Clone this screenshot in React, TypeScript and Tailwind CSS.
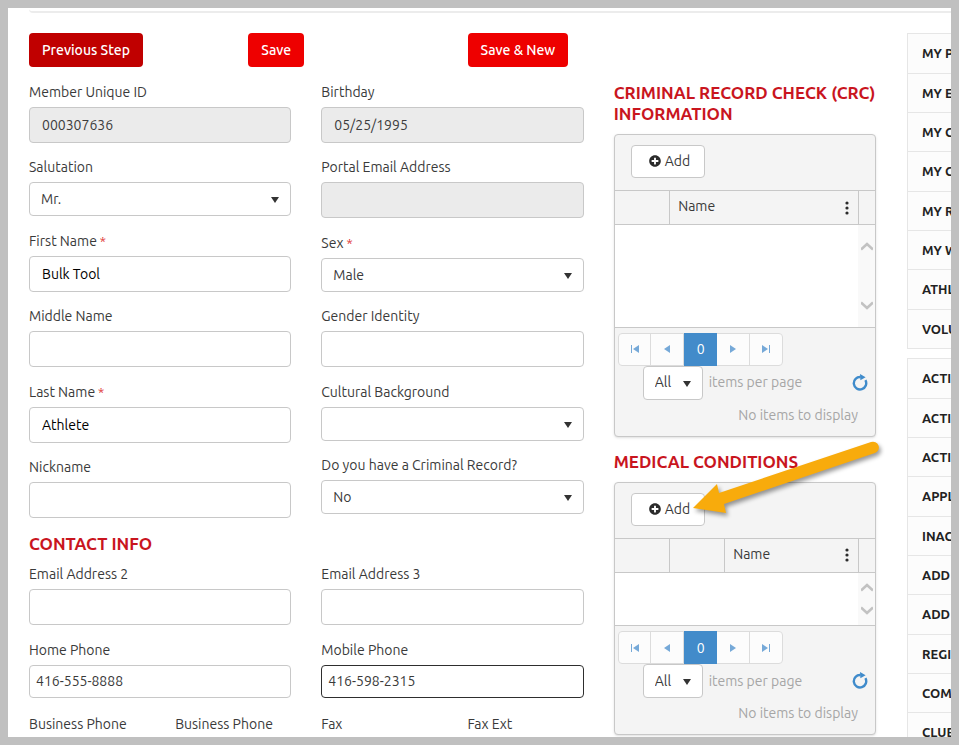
import { useState } from "react";
import type { ReactNode } from "react";
import clsx from "clsx";
import { FaPlusCircle } from "react-icons/fa";

const profileLinks = ["MY P", "MY E", "MY C", "MY C", "MY R", "MY W", "ATHL", "VOLU"];
const adminLinks = ["ACTI", "ACTI", "ACTI", "APPL", "INAC", "ADD", "ADD", "REGI", "COM", "CLUB"];

const Field = ({ id, label, required, children }: { id: string; label: string; required?: boolean; children?: ReactNode }) => (
  <div className="mb-[14px] even:mb-[15px]">
    <label htmlFor={id} className="mb-[5px] block h-5 whitespace-nowrap leading-5">
      {label}
      {required && <span className="text-[13px] text-[#e0312f]"> *</span>}
    </label>
    {children}
  </div>
);

const TextInput = ({ id, value = "", disabled }: { id: string; value?: string; disabled?: boolean }) => (
  <input
    id={id}
    type="text"
    defaultValue={value}
    disabled={disabled}
    className={clsx(
      "block h-9 w-full rounded border border-[#c8c8c8] px-3 pb-px outline-none",
      disabled ? "bg-[#ebebeb] text-[#3c3c3c]" : "bg-white text-black"
    )}
  />
);

const PhoneInput = ({ id, value, focused }: { id: string; value: string; focused?: boolean }) => (
  <input
    id={id}
    type="tel"
    defaultValue={value}
    className={clsx(
      "block h-[33px] w-full rounded border bg-white px-[6px] pb-px outline-none",
      focused ? "border-[#2e2e2e]" : "border-[#c8c8c8]"
    )}
  />
);

const Caret = ({ className }: { className?: string }) => (
  <svg className={clsx("pointer-events-none absolute h-[6px] w-2", className)} viewBox="0 0 8 6">
    <path d="M0 0h8L4 6z" fill="#333" />
  </svg>
);

const SelectInput = ({ id, options }: { id: string; options: string[] }) => (
  <div className="relative">
    <select id={id} className="block h-[34px] w-full appearance-none rounded border border-[#c8c8c8] bg-white px-[11px] pb-px outline-none">
      {options.map((o) => (
        <option key={o}>{o}</option>
      ))}
    </select>
    <Caret className="right-3 top-[15px]" />
  </div>
);

const SectionTitle = ({ children }: { children: ReactNode }) => (
  <h2 className="mb-[10px] text-[17px] font-bold leading-[21px] text-[#c9151e]">{children}</h2>
);

const Chevron = ({ up }: { up?: boolean }) => (
  <svg width="12" height="9" viewBox="0 0 12 9" className="block">
    <path d={up ? "M0 7.5L6 2l6 5.5" : "M0 1.5L6 7l6-5.5"} fill="none" stroke="#c2c2c2" strokeWidth="2.6" />
  </svg>
);

/* --- Pager --- */
const pagerIcons = {
  first: "M0 1h1v8H0zM8 1v8L2 5z",
  prev: "M7 1v8L1 5z",
  next: "M1 1v8l6-4z",
  last: "M0 1v8l6-4zM7 1h1v8H7z",
};

const PagerButton = ({ icon, label }: { icon: keyof typeof pagerIcons; label: string }) => (
  <button aria-label={label} className="flex flex-1 items-center justify-center border-r border-[#dcdcdc] last:border-r-0">
    <svg width="8" height="10" viewBox="0 0 8 10">
      <path d={pagerIcons[icon]} fill="#76a9d8" />
    </svg>
  </button>
);

const Pager = ({ id }: { id: string }) => {
  const [size, setSize] = useState("All");
  return (
    <div className="h-[109px] border-t border-[#c8c8c8] pl-[3px] pt-[5px]">
      <div className="flex h-[33px] w-[165px] rounded border border-[#dcdcdc] bg-[#fcfcfc]">
        <PagerButton icon="first" label="First page" />
        <PagerButton icon="prev" label="Previous page" />
        <button className="-my-px w-[33px] shrink-0 bg-[#428bca] text-white">0</button>
        <PagerButton icon="next" label="Next page" />
        <PagerButton icon="last" label="Last page" />
      </div>
      <div className="flex items-center pl-[25px] pr-[7px]">
        <div className="relative">
          <select
            id={id}
            value={size}
            onChange={(e) => setSize(e.target.value)}
            className="block h-[34px] w-[60px] appearance-none rounded border border-[#c8c8c8] bg-white pb-px pl-[11px] outline-none"
          >
            <option>All</option>
          </select>
          <Caret className="right-3 top-[15px]" />
        </div>
        <label htmlFor={id} className="ml-[6px] pb-px text-[#a6a6a6]">items per page</label>
        <button aria-label="Refresh" className="ml-auto pb-[2px]">
          <svg width="16" height="18" viewBox="0 0 16 18" className="block">
            <path d="M13.4 7.2A6.2 6.2 0 1 1 8.6 4.1" fill="none" stroke="#3f8bcb" strokeWidth="2.4" />
            <path d="M8 1l5.6 3.2L8.4 7.2z" fill="#3f8bcb" />
          </svg>
        </button>
      </div>
      <p className="mt-[5px] pr-[17px] text-right leading-5 text-[#a6a6a6]">No items to display</p>
    </div>
  );
};

/* --- Grid panel: toolbar, header row, scroll area, pager --- */
const GridPanel = ({ id, extraColumns, tall }: { id: string; extraColumns: number; tall?: boolean }) => (
  <div className="overflow-hidden rounded border border-[#c8c8c8] bg-[#f4f4f4] shadow-sm">
    <div className="h-[55px] px-4 py-[10px]">
      <button className="flex h-[33px] w-[74px] items-center gap-1 rounded border border-[#c8c8c8] bg-white pb-px pl-[17px]">
        <FaPlusCircle size={12} className="shrink-0 text-[#2b2b2b]" />
        Add
      </button>
    </div>
    <table className="w-full table-fixed border-collapse border-t border-[#c8c8c8]">
      <thead>
        <tr className="h-[34px] border-b border-[#c8c8c8]">
          {Array.from({ length: extraColumns }, (_, i) => (
            <th key={i} className="w-[55px] border-r border-[#c8c8c8]" />
          ))}
          <th className="border-r border-[#c8c8c8] pl-2 pr-[9px] text-left font-normal">
            <div className="flex items-center justify-between">
              <span className="pb-[3px]">Name</span>
              <button aria-label="Column menu">
                <svg width="4" height="14" viewBox="0 0 4 14" className="block" fill="#2b2b2b">
                  <circle cx="2" cy="2" r="1.6" />
                  <circle cx="2" cy="7" r="1.6" />
                  <circle cx="2" cy="12" r="1.6" />
                </svg>
              </button>
            </div>
          </th>
          <th className="w-[17px]" />
        </tr>
      </thead>
      <tbody>
        <tr className={tall ? "h-[102px]" : "h-[53px]"}>
          <td colSpan={extraColumns + 1} className="bg-white" />
          <td className="bg-[#f9f9f9] p-0">
            <div className={clsx("flex flex-col items-center justify-between", tall ? "h-[68px]" : "h-8")}>
              <Chevron up />
              <Chevron />
            </div>
          </td>
        </tr>
      </tbody>
    </table>
    <Pager id={id} />
  </div>
);

const SideMenu = ({ items }: { items: string[] }) => (
  <ul className="mb-[9px] border-l border-t border-[#e6e6e6] bg-[#fcfcfc]">
    {items.map((item, i) => (
      <li key={i} className="h-[39px] border-b border-[#e6e6e6] nth-[3n+1]:h-10">
        <a href="#" className="flex h-full items-center whitespace-nowrap pl-[14px] text-[13px] font-bold text-[#222]">{item}</a>
      </li>
    ))}
  </ul>
);

const Arrow = () => (
  <svg className="pointer-events-none absolute -top-4 left-[75px] drop-shadow-[2px_3px_2px_rgba(0,0,0,0.4)]" width="195" height="90" viewBox="0 0 195 90">
    <path d="M4 73L28 49l2 9L182 7a5.5 5.5 0 0 1 4 11L35 69l2 9z" fill="#f8ab0c" />
  </svg>
);

const MemberProfile = () => {
  return (
    <div className="h-screen overflow-hidden border-8 border-[#c0c0c0] bg-white font-['Ubuntu','Noto_Sans',sans-serif] text-sm text-[#3a3a3a]">
      <div className="ml-[21px] h-[5px] rounded-bl border-b-2 border-[#ececec]" />

      <div className="flex gap-[31px] pl-[21px] pt-5">
        <main className="min-w-0 flex-1">
          <div className="mb-[15px] grid grid-cols-4 justify-items-start gap-x-[30px] font-medium text-white">
            <button className="h-[34px] whitespace-nowrap rounded bg-[#c00000] px-[13px]">Previous Step</button>
            <button className="h-[34px] whitespace-nowrap rounded bg-[#ee0000] px-[13px]">Save</button>
            <button className="h-[34px] whitespace-nowrap rounded bg-[#ee0000] px-[13px]">Save &amp; New</button>
          </div>

          <div className="grid grid-cols-3 gap-x-[30px]">
            <form className="col-span-2">
              <div className="grid grid-cols-2 gap-x-[30px]">
                <div>
                  <Field id="member-id" label="Member Unique ID"><TextInput id="member-id" value="000307636" disabled /></Field>
                  <Field id="salutation" label="Salutation"><SelectInput id="salutation" options={["Mr."]} /></Field>
                  <Field id="first-name" label="First Name" required><TextInput id="first-name" value="Bulk Tool" /></Field>
                  <Field id="middle-name" label="Middle Name"><TextInput id="middle-name" /></Field>
                  <Field id="last-name" label="Last Name" required><TextInput id="last-name" value="Athlete" /></Field>
                  <Field id="nickname" label="Nickname"><TextInput id="nickname" /></Field>
                </div>
                <div>
                  <Field id="birthday" label="Birthday"><TextInput id="birthday" value="05/25/1995" disabled /></Field>
                  <Field id="portal-email" label="Portal Email Address"><TextInput id="portal-email" disabled /></Field>
                  <Field id="sex" label="Sex" required><SelectInput id="sex" options={["Male"]} /></Field>
                  <Field id="gender" label="Gender Identity"><TextInput id="gender" /></Field>
                  <Field id="culture" label="Cultural Background"><SelectInput id="culture" options={[""]} /></Field>
                  <Field id="criminal" label="Do you have a Criminal Record?"><SelectInput id="criminal" options={["No"]} /></Field>
                </div>
              </div>

              <SectionTitle>CONTACT INFO</SectionTitle>
              <div className="grid grid-cols-2 gap-x-[30px]">
                <Field id="email2" label="Email Address 2"><TextInput id="email2" /></Field>
                <Field id="email3" label="Email Address 3"><TextInput id="email3" /></Field>
                <Field id="home-phone" label="Home Phone"><PhoneInput id="home-phone" value="416-555-8888" /></Field>
                <Field id="mobile-phone" label="Mobile Phone"><PhoneInput id="mobile-phone" value="416-598-2315" focused /></Field>
              </div>
              <div className="grid grid-cols-4 gap-x-[30px] pt-px leading-5">
                <span className="whitespace-nowrap">Business Phone</span>
                <span className="whitespace-nowrap">Business Phone</span>
                <span>Fax</span>
                <span className="whitespace-nowrap">Fax Ext</span>
              </div>
            </form>

            <div>
              <section className="mb-[14px]">
                <SectionTitle>CRIMINAL RECORD CHECK (CRC) INFORMATION</SectionTitle>
                <GridPanel id="crc-size" extraColumns={1} tall />
              </section>
              <section className="relative">
                <SectionTitle>MEDICAL CONDITIONS</SectionTitle>
                <GridPanel id="medical-size" extraColumns={2} />
                <Arrow />
              </section>
            </div>
          </div>
        </main>

        {/* menu runs off the right edge */}
        <aside className="w-11 shrink-0 overflow-hidden">
          <SideMenu items={profileLinks} />
          <SideMenu items={adminLinks} />
        </aside>
      </div>
    </div>
  );
};

export default MemberProfile;
